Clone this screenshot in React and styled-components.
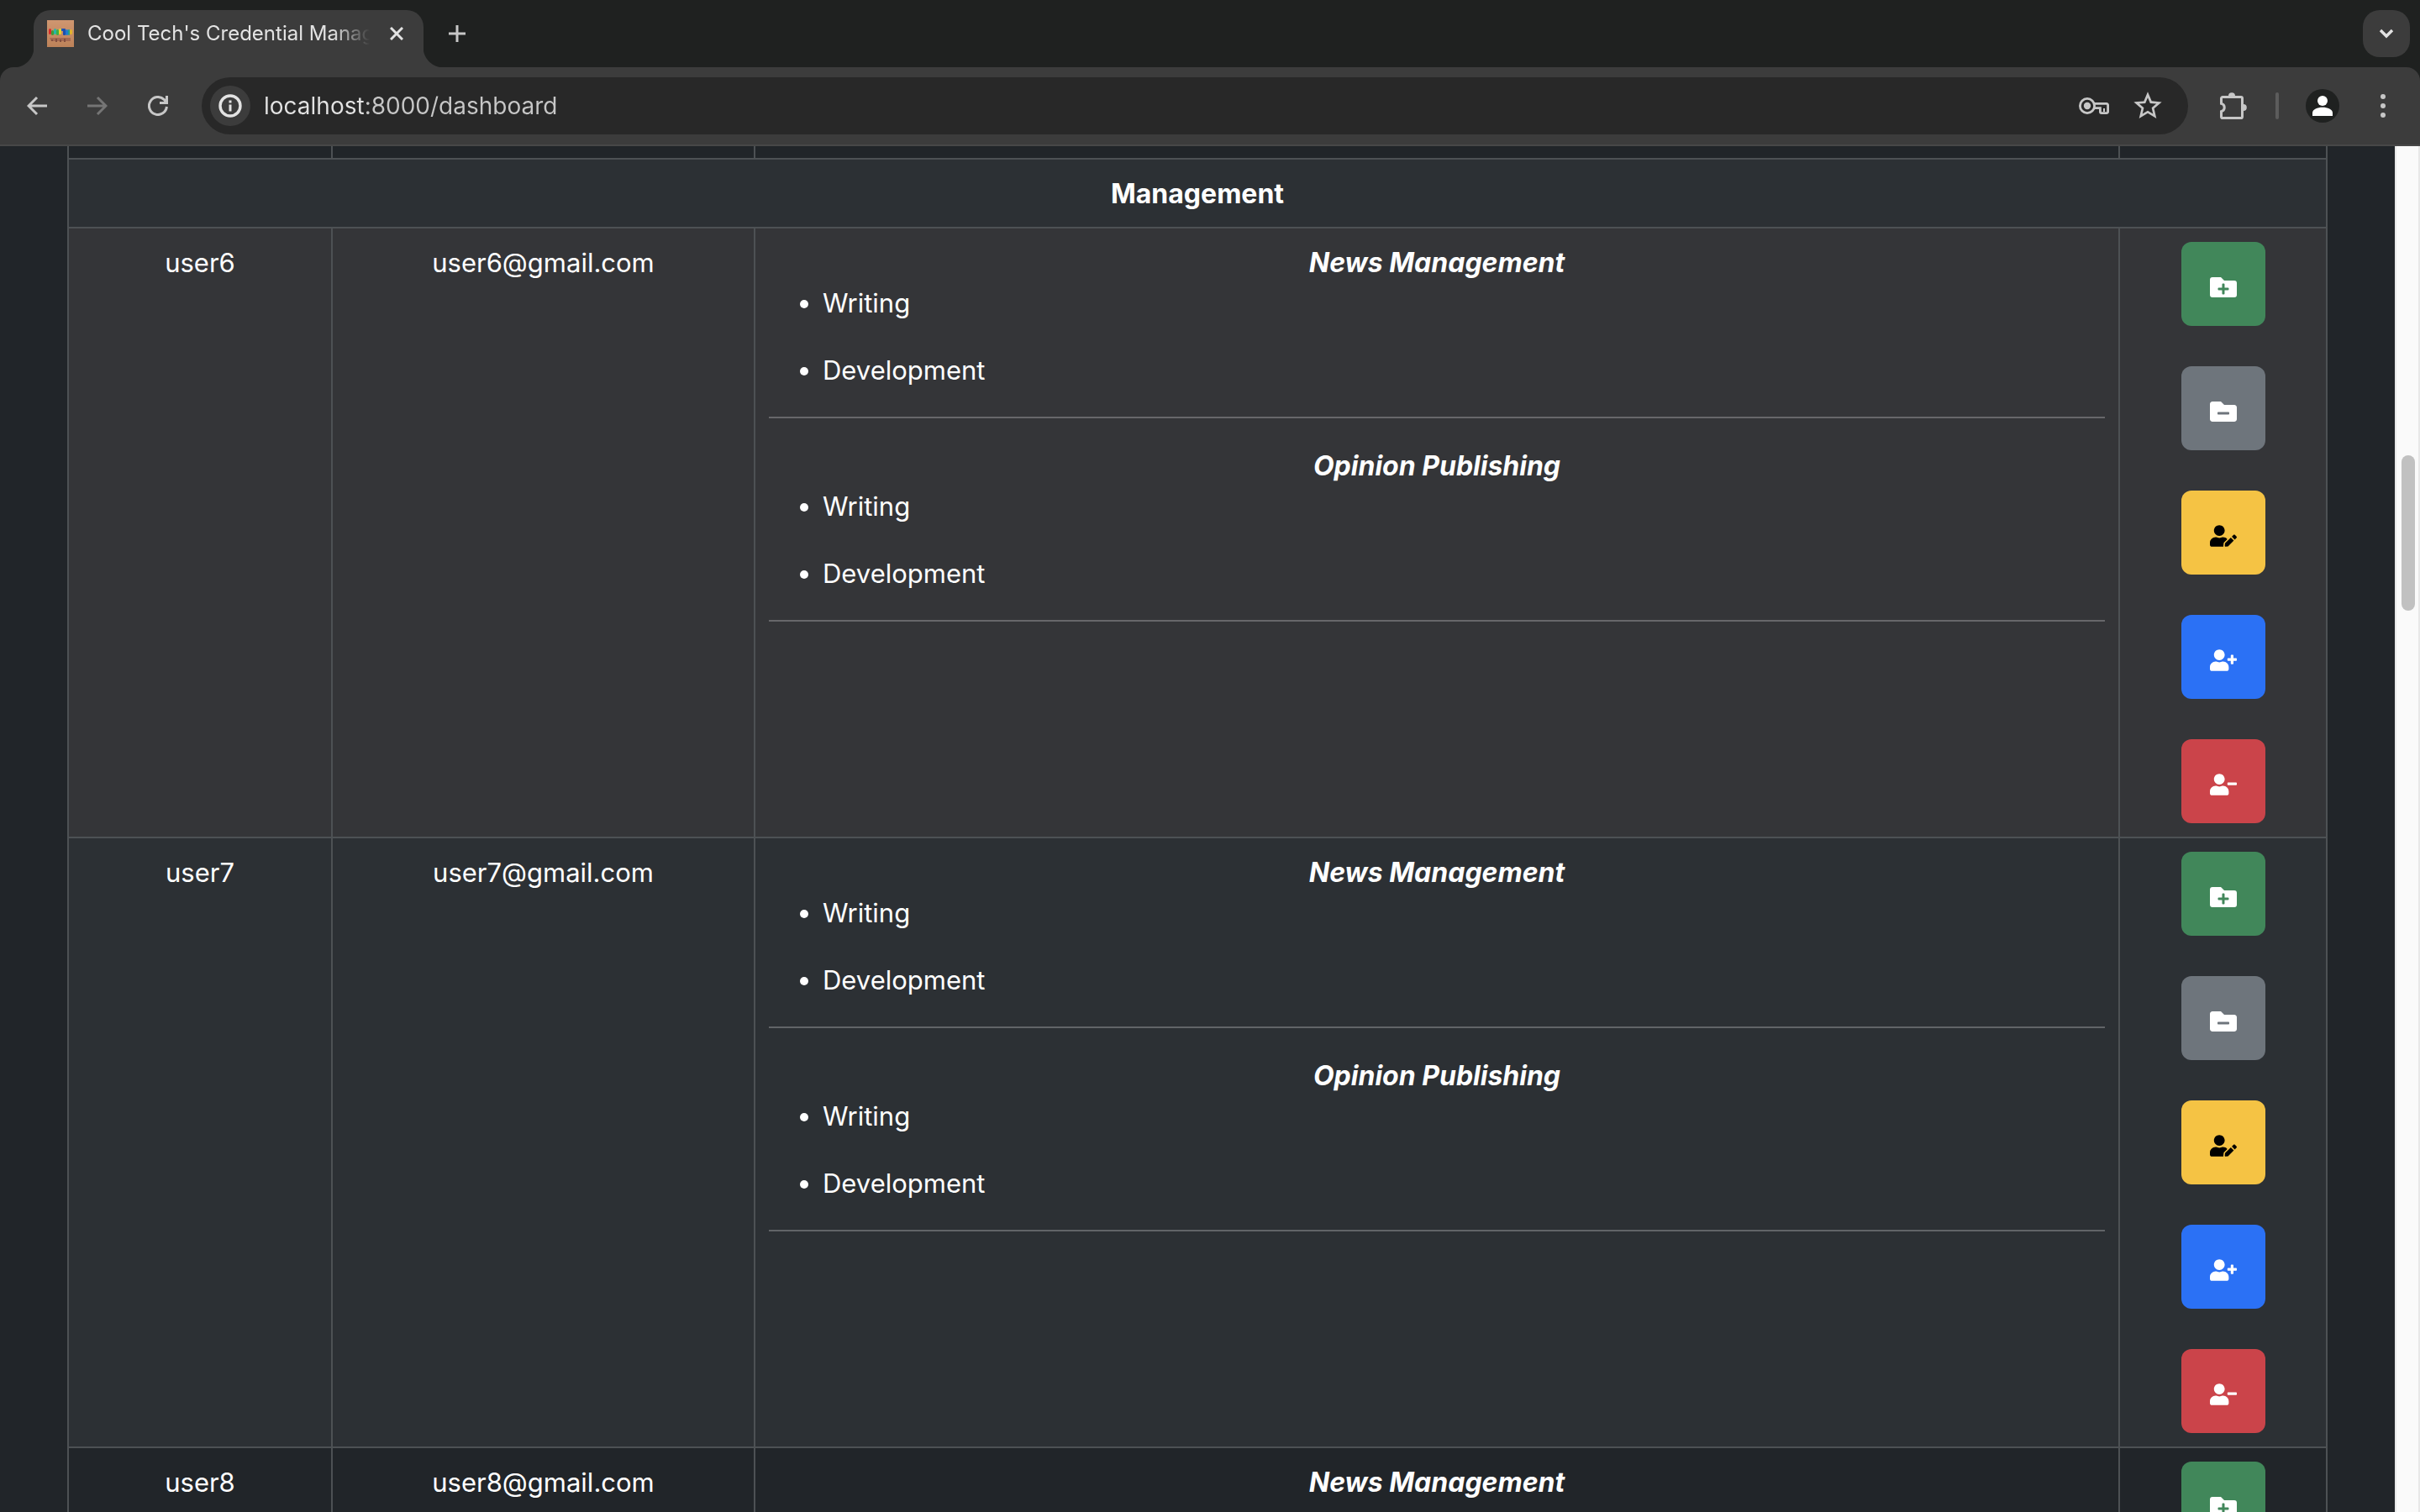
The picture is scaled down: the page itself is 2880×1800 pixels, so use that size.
import React from "react";
import styled, { createGlobalStyle } from "styled-components";
import {
  FaFolderPlus,
  FaFolderMinus,
  FaUserEdit,
  FaUserPlus,
  FaUserMinus,
} from "react-icons/fa";
import { MdStarBorder } from "react-icons/md";

const color = {
  strip: "#1f2120",
  toolbar: "#3c3c3c",
  field: "#282828",
  icon: "#c7c7c7",
  iconBright: "#e3e3e3",
  iconDim: "#757575",
  page: "#212529",
  striped: "#2c3034",
  hovered: "#343538",
  border: "#4d5154",
};

const sans = `Inter, "Liberation Sans", Arial, sans-serif`;

const GlobalStyle = createGlobalStyle`
  * { box-sizing: border-box; }
  body { margin: 0; background: ${color.page}; font-family: ${sans}; }
  button { font: inherit; border: 0; padding: 0; margin: 0; background: none; cursor: pointer; }
  svg { display: block; flex: none; }
`;

const Window = styled.div`
  display: flex;
  flex-direction: column;
  height: 100vh;
  overflow: hidden;
`;

/* ---------- browser frame ---------- */

const TabStrip = styled.header`
  display: flex;
  align-items: center;
  flex: none;
  height: 80px;
  padding: 0 12px 0 40px;
  background: ${color.strip};
`;

const Tab = styled.div`
  position: relative;
  display: flex;
  align-items: center;
  align-self: flex-end;
  width: 464px;
  height: 68px;
  padding: 0 16px 12px;
  border-radius: 20px 20px 0 0;
  background: ${color.toolbar};

  &::before,
  &::after {
    content: "";
    position: absolute;
    bottom: 0;
    width: 24px;
    height: 24px;
  }
  &::before {
    right: 100%;
    background: radial-gradient(circle at 0 0, transparent 24px, ${color.toolbar} 25px);
  }
  &::after {
    left: 100%;
    background: radial-gradient(circle at 100% 0, transparent 24px, ${color.toolbar} 25px);
  }
`;

const TabTitle = styled.span`
  flex: 1;
  min-width: 0;
  margin: 0 16px;
  overflow: hidden;
  white-space: nowrap;
  font-size: 24px;
  line-height: 32px;
  font-weight: 400;
  color: ${color.iconBright};
  mask-image: linear-gradient(to right, #000 calc(100% - 44px), transparent);
`;

const IconButton = styled.button`
  display: flex;
  align-items: center;
  justify-content: center;
  flex: none;
  width: ${(p) => p.$size || 48}px;
  height: ${(p) => p.$size || 48}px;
  border-radius: ${(p) => p.$radius || "50%"};
  background: ${(p) => p.$bg || "transparent"};
  color: ${(p) => p.$color || color.icon};
`;

const NewTab = styled(IconButton)`
  margin-left: 16px;
`;

const TabSearch = styled(IconButton)`
  margin-left: auto;
`;

const ToolbarBack = styled.div`
  flex: none;
  background: ${color.strip};
`;

const Toolbar = styled.nav`
  display: flex;
  align-items: center;
  height: 94px;
  padding: 0 20px;
  border-bottom: 2px solid #474747;
  border-radius: 16px 16px 0 0;
  background: ${color.toolbar};
`;

const NavButtons = styled.div`
  display: flex;
  gap: 24px;
  margin-right: 28px;
`;

const AddressBar = styled.form`
  display: flex;
  align-items: center;
  flex: 1;
  height: 68px;
  padding: 0 24px 0 10px;
  border-radius: 34px;
  background: ${color.field};
`;

const Address = styled.input`
  flex: 1;
  min-width: 0;
  height: 48px;
  margin: 0 16px;
  padding: 0;
  border: 0;
  outline: 0;
  font: 400 28px/48px ${sans};
  color: transparent;
  background: linear-gradient(to right, ${color.iconBright} 120px, ${color.icon} 120px);
  background-clip: text;
`;

const AddressActions = styled.div`
  display: flex;
  gap: 16px;
`;

const ToolbarEnd = styled.div`
  display: flex;
  align-items: center;
  gap: 24px;
  margin-left: 30px;
`;

const Separator = styled.span`
  width: 4px;
  height: 32px;
  margin: 0 4px 0 2px;
  border-radius: 2px;
  background: #5c5c5c;
`;

/* ---------- page ---------- */

const Viewport = styled.div`
  display: flex;
  flex: 1;
  min-height: 0;
`;

const Page = styled.main`
  flex: 1;
  min-width: 0;
  padding: 0 80px;
  overflow: hidden;
  background: ${color.page};
`;

const ScrollTrack = styled.div`
  flex: none;
  width: 30px;
  padding: 368px 4px 0 6px;
  border: solid #e8e8e8;
  border-width: 0 2px;
  background: #fafafa;
`;

const ScrollThumb = styled.div`
  width: 16px;
  height: 185px;
  border-radius: 8px;
  background: #c1c1c1;
`;

const Table = styled.table`
  width: 100%;
  table-layout: fixed;
  border-collapse: collapse;
  color: #fff;
  font-size: 31px;
  line-height: 48px;
  text-align: center;
`;

const Col = styled.col`
  width: ${(p) => p.$width};
`;

const Row = styled.tr`
  background: ${(p) => p.$bg || color.page};
`;

const Cell = styled.td`
  padding: 16px;
  border: 2px solid ${color.border};
  vertical-align: top;
`;

const TextCell = styled(Cell)`
  padding: 17px 16px 15px;
`;

const HeadCell = styled(TextCell)`
  font-size: 32px;
  font-weight: 700;
`;

const EndCell = styled(Cell)`
  height: 15px;
  padding: 0;
  border-top: 0;
`;

const Division = styled.section`
  padding: 1px 0 31px;
  border-bottom: 2px solid rgba(255, 255, 255, 0.25);
  margin-bottom: 32px;
`;

const DivisionName = styled.h2`
  margin: 0;
  font-size: 32px;
  line-height: 48px;
  font-weight: 700;
  font-style: italic;
`;

const Repositories = styled.ul`
  display: grid;
  row-gap: 32px;
  margin: 0;
  padding: 0 0 0 64px;
  text-align: left;
`;

const Actions = styled.div`
  display: flex;
  flex-direction: column;
  align-items: center;
  gap: 48px;
`;

const ActionButton = styled.button`
  display: flex;
  align-items: center;
  justify-content: center;
  width: 100px;
  height: 100px;
  padding-top: 8px;
  border-radius: 12px;
  background: ${(p) => p.$bg};
  color: ${(p) => p.$color || "#fff"};
  font-size: 32px;
`;

/* ---------- drawings ---------- */

const Line = ({ w = 24, h = 24, sw = 3, children }) => (
  <svg width={w} height={h} viewBox={`0 0 ${w} ${h}`} fill="none" stroke="currentColor" strokeWidth={sw} aria-hidden="true">
    {children}
  </svg>
);

const Favicon = () => (
  <svg width="32" height="32" viewBox="0 0 32 32" aria-hidden="true">
    <defs>
      <linearGradient id="wood" x1="0" y1="0" x2="0" y2="1">
        <stop offset="0" stopColor="#cf9670" />
        <stop offset="1" stopColor="#bd8259" />
      </linearGradient>
    </defs>
    <rect width="32" height="32" fill="url(#wood)" />
    <path d="M3 21h25v4H5z" fill="#9b604e" opacity=".75" />
    <path d="M5 23h2v2H5zM10 22h2v4h-2zM15 23h2v3h-2zM20 22h2v4h-2z" fill="#83503f" />
    <rect x="2" y="10" width="3" height="7" rx="1.5" fill="#d92b2b" />
    <rect x="5" y="12" width="3" height="6" rx="1.5" fill="#3f9c3a" />
    <rect x="8" y="10" width="3" height="7" rx="1.5" fill="#2bb6a6" />
    <rect x="11" y="11" width="3" height="7" rx="1.5" fill="#3cae46" />
    <rect x="14" y="10" width="3" height="7" rx="1.5" fill="#e8d32a" />
    <rect x="17" y="10" width="3" height="3" fill="#2456b8" />
    <rect x="19" y="10" width="3" height="8" rx="1" fill="#1d4fae" />
    <rect x="22" y="11" width="3" height="7" rx="1.5" fill="#1f7bd0" />
    <rect x="25" y="11" width="2" height="7" rx="1" fill="#23a08a" />
    <rect x="27" y="11" width="3" height="6" rx="1.5" fill="#e0b32c" />
  </svg>
);

const BackIcon = () => (
  <Line>
    <path d="M24 12H2M12 2 2 12l10 10" />
  </Line>
);

const ForwardIcon = () => (
  <Line>
    <path d="M0 12h22M12 2l10 10-10 10" />
  </Line>
);

const ReloadIcon = () => (
  <Line>
    <path d="M22.4 13A10.5 10.5 0 1 1 19.4 4.6L22 8M22.5 0v8.5H14" />
  </Line>
);

const InfoIcon = () => (
  <Line w={28} h={28} sw={3.4}>
    <circle cx="14" cy="14" r="12" />
    <path d="M14 12.4v8.2M14 7.4v3" strokeWidth="3" />
  </Line>
);

const KeyIcon = () => (
  <Line w={36} h={20} sw={2.8}>
    <circle cx="10" cy="10" r="8.6" />
    <circle cx="10" cy="10" r="4.2" fill="currentColor" stroke="none" />
    <path d="M18 7.4h15a1.6 1.6 0 0 1 1.6 1.6v8a1.6 1.6 0 0 1-1.6 1.6h-6a1.6 1.6 0 0 1-1.6-1.6v-4.4H18" />
    <path d="M30 13v4" strokeWidth="2" />
  </Line>
);

const PuzzleIcon = () => (
  <Line w={32} h={32}>
    <path d="M1.5 13.4V7.1a1.6 1.6 0 0 1 1.6-1.6h21.8a1.6 1.6 0 0 1 1.6 1.6v21.8a1.6 1.6 0 0 1-1.6 1.6H3.1a1.6 1.6 0 0 1-1.6-1.6v-6.3a4.7 4.7 0 0 0 0-9.2z" />
    <path d="M14 .2a4 4 0 0 1 4 4h-8a4 4 0 0 1 4-4zM31.8 18a4 4 0 0 1-4 4v-8a4 4 0 0 1 4 4z" fill="currentColor" stroke="none" />
  </Line>
);

const AvatarIcon = () => (
  <svg width="40" height="40" viewBox="0 0 40 40" aria-hidden="true">
    <circle cx="20" cy="20" r="20" fill={color.strip} />
    <circle cx="20" cy="14" r="6" fill="#fff" />
    <path d="M8 32v-3.4C8 24 14 21.8 20 21.8s12 2.2 12 6.8V32z" fill="#fff" />
  </svg>
);

const MenuIcon = () => (
  <svg width="6" height="28" viewBox="0 0 6 28" fill="currentColor" aria-hidden="true">
    <circle cx="3" cy="3" r="3" />
    <circle cx="3" cy="14" r="3" />
    <circle cx="3" cy="25" r="3" />
  </svg>
);

/* ---------- data ---------- */

const divisions = [
  { name: "News Management", repositories: ["Writing", "Development"] },
  { name: "Opinion Publishing", repositories: ["Writing", "Development"] },
];

const users = [
  { name: "user6", email: "user6@gmail.com", bg: color.hovered },
  { name: "user7", email: "user7@gmail.com", bg: color.striped },
  { name: "user8", email: "user8@gmail.com", bg: color.page },
];

const actions = [
  { label: "Add to division", Icon: FaFolderPlus, bg: "#41875a" },
  { label: "Remove from division", Icon: FaFolderMinus, bg: "#6e757c" },
  { label: "Change role", Icon: FaUserEdit, bg: "#f5c344", fg: "#000" },
  { label: "Add to unit", Icon: FaUserPlus, bg: "#2b71f5" },
  { label: "Remove from unit", Icon: FaUserMinus, bg: "#cb444a" },
];

function BrowserFrame() {
  return (
    <>
      <TabStrip>
        <Tab>
          <Favicon />
          <TabTitle>Cool Tech's Credential Manager</TabTitle>
          <IconButton $size={32} $color={color.iconBright} aria-label="Close tab">
            <Line w={16} h={16}>
              <path d="m1 1 14 14M15 1 1 15" />
            </Line>
          </IconButton>
        </Tab>
        <NewTab aria-label="New tab">
          <Line w={20} h={20}>
            <path d="M10 0v20M0 10h20" />
          </Line>
        </NewTab>
        <TabSearch $size={56} $radius="20px" $bg={color.toolbar} $color={color.iconBright} aria-label="Search tabs">
          <Line w={18} h={12} sw={3.4}>
            <path d="m2 2 7 7 7-7" />
          </Line>
        </TabSearch>
      </TabStrip>
      <ToolbarBack>
        <Toolbar>
          <NavButtons>
            <IconButton aria-label="Back"><BackIcon /></IconButton>
            <IconButton $color={color.iconDim} aria-label="Forward"><ForwardIcon /></IconButton>
            <IconButton aria-label="Reload"><ReloadIcon /></IconButton>
          </NavButtons>
          <AddressBar>
            <IconButton type="button" $bg={color.toolbar} $color={color.iconBright} aria-label="Site information">
              <InfoIcon />
            </IconButton>
            <Address aria-label="Address" defaultValue="localhost:8000/dashboard" />
            <AddressActions>
              <IconButton type="button" aria-label="Passwords"><KeyIcon /></IconButton>
              <IconButton type="button" aria-label="Bookmark"><MdStarBorder size={40} /></IconButton>
            </AddressActions>
          </AddressBar>
          <ToolbarEnd>
            <IconButton aria-label="Extensions"><PuzzleIcon /></IconButton>
            <Separator />
            <IconButton aria-label="Profile"><AvatarIcon /></IconButton>
            <IconButton aria-label="Menu"><MenuIcon /></IconButton>
          </ToolbarEnd>
        </Toolbar>
      </ToolbarBack>
    </>
  );
}

function UserRow({ user }) {
  return (
    <Row $bg={user.bg}>
      <TextCell>{user.name}</TextCell>
      <TextCell>{user.email}</TextCell>
      <Cell>
        {divisions.map((division) => (
          <Division key={division.name}>
            <DivisionName>{division.name}</DivisionName>
            <Repositories>
              {division.repositories.map((repository) => (
                <li key={repository}>{repository}</li>
              ))}
            </Repositories>
          </Division>
        ))}
      </Cell>
      <Cell>
        <Actions>
          {actions.map(({ label, Icon, bg, fg }) => (
            <ActionButton key={label} $bg={bg} $color={fg} aria-label={label}>
              <Icon />
            </ActionButton>
          ))}
        </Actions>
      </Cell>
    </Row>
  );
}

export default function App() {
  return (
    <Window>
      <GlobalStyle />
      <BrowserFrame />
      <Viewport>
        <Page>
          <Table>
            <colgroup>
              <Col $width="314px" />
              <Col $width="503px" />
              <Col />
              <Col $width="247px" />
            </colgroup>
            <tbody>
              <Row>
                <EndCell />
                <EndCell />
                <EndCell />
                <EndCell />
              </Row>
              <Row $bg={color.striped}>
                <HeadCell as="th" colSpan={4}>Management</HeadCell>
              </Row>
              {users.map((user) => (
                <UserRow key={user.name} user={user} />
              ))}
            </tbody>
          </Table>
        </Page>
        <ScrollTrack>
          <ScrollThumb />
        </ScrollTrack>
      </Viewport>
    </Window>
  );
}
